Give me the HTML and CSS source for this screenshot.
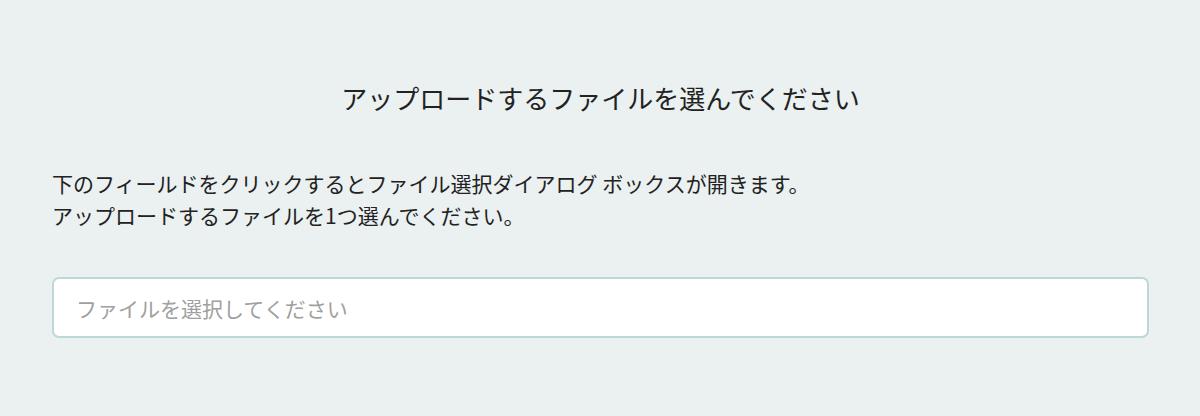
FILE: index.html
```html
<!DOCTYPE html>
<html lang="ja">
<head>
    <meta charset="UTF-8">
    <title>ファイルのアップロード</title>
    <link rel="stylesheet" href="styles.css">
</head>
<body>
    <div class="upload-page">
        <h2 class="upload-title">アップロードするファイルを選んでください</h2>
        <p class="upload-note">下のフィールドをクリックするとファイル選択ダイアログ ボックスが開きます。<br>アップロードするファイルを1つ選んでください。</p>
        <div class="file-field">
            <input type="text" class="file-input" placeholder="ファイルを選択してください" readonly>
        </div>
    </div>
</body>
</html>
```

FILE: styles.css
```css
html, body {
    margin: 0;
    padding: 0;
    background: #ebf0f0;
    font-family: "Noto Sans CJK JP", "Noto Sans", sans-serif;
    color: #222;
}
.upload-page {
    padding: 78px 51px 0 52px;
}
.upload-title {
    text-align: center;
    font-size: 26px;
    font-weight: normal;
    line-height: 40px;
    margin: 0 0 49px 0;
}
.upload-note {
    font-size: 21px;
    line-height: 32px;
    margin: 0 0 46px 0;
}
.file-field {
    display: flex;
}
.file-input {
    flex: 1;
    height: 61px;
    box-sizing: border-box;
    border: 2px solid #bcd8d8;
    border-radius: 7px;
    background: #fff;
    padding: 0 22px;
    font-family: inherit;
    font-size: 21px;
    color: #333;
    outline: none;
}
.file-input::placeholder {
    color: #a0a0a0;
}
```
